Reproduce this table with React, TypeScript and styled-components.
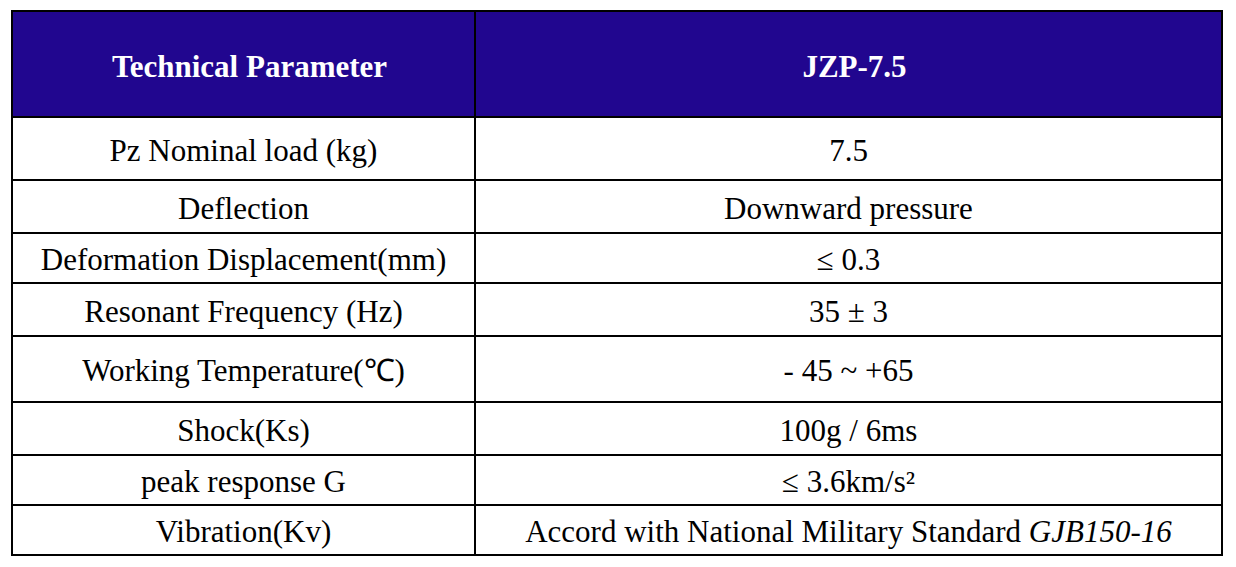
import React from "react";
import styled, { createGlobalStyle } from "styled-components";

const GlobalStyle = createGlobalStyle`
  html, body { margin: 0; padding: 0; background: #ffffff; }
  body { font-family: "Liberation Serif", "Times New Roman", serif; }
`;

const Page = styled.div`
  padding: 10px 0 0 11px;
`;

const Table = styled.table`
  border-collapse: collapse;
  width: 1210px;
  table-layout: fixed;
  font-family: "Liberation Serif", "Times New Roman", serif;
  color: #000;
`;

const HeadCell = styled.th`
  background: #21068f;
  color: #ffffff;
  font-weight: bold;
  font-size: 31px;
  height: 99px;
  padding: 5px 0 0 12px;
  border: 2px solid #000;
  text-align: center;
  vertical-align: middle;
`;

const Cell = styled.td<{ $h: number }>`
  height: ${(p) => p.$h}px;
  padding: 4px 0 0 0;
  border: 2px solid #000;
  font-size: 31px;
  line-height: 34px;
  text-align: center;
  vertical-align: middle;
  box-sizing: border-box;
  white-space: nowrap;
`;

const Italic = styled.i`
  font-style: italic;
`;

const rows: { label: string; value: React.ReactNode; h: number }[] = [
  { label: "Pz Nominal load (kg)", value: "7.5", h: 63 },
  { label: "Deflection", value: "Downward pressure", h: 53 },
  { label: "Deformation Displacement(mm)", value: "≤ 0.3", h: 50 },
  { label: "Resonant Frequency (Hz)", value: "35 ± 3", h: 53 },
  { label: "Working Temperature(℃)", value: "- 45 ~ +65", h: 66 },
  { label: "Shock(Ks)", value: "100g / 6ms", h: 53 },
  { label: "peak response G", value: "≤ 3.6km/s²", h: 50 },
  {
    label: "Vibration(Kv)",
    value: (
      <>
        Accord with National Military Standard <Italic>GJB150-16</Italic>
      </>
    ),
    h: 50,
  },
];

export default function App() {
  return (
    <>
      <GlobalStyle />
      <Page>
        <Table>
          <colgroup>
            <col style={{ width: 463 }} />
            <col style={{ width: 747 }} />
          </colgroup>
          <thead>
            <tr>
              <HeadCell>Technical Parameter</HeadCell>
              <HeadCell>JZP-7.5</HeadCell>
            </tr>
          </thead>
          <tbody>
            {rows.map((r) => (
              <tr key={r.label}>
                <Cell $h={r.h}>{r.label}</Cell>
                <Cell $h={r.h}>{r.value}</Cell>
              </tr>
            ))}
          </tbody>
        </Table>
      </Page>
    </>
  );
}
